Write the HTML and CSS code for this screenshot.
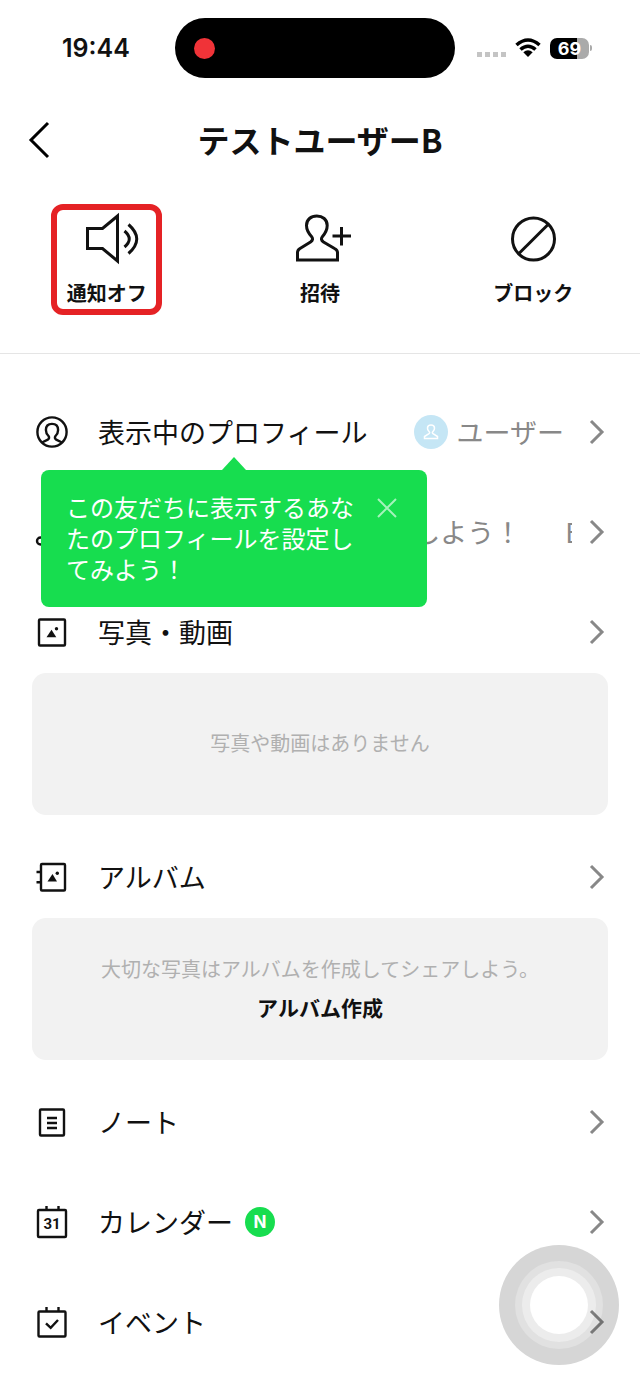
FILE: index.html
```html
<!DOCTYPE html>
<html lang="ja">
<head>
    <meta charset="utf-8">
    <meta name="viewport" content="width=device-width, initial-scale=1">
    <title>テストユーザーB</title>
    <link rel="stylesheet" href="styles.css">
</head>
<body>

<div class="status-bar">
    <span class="time">19:44</span>
    <div class="island"><span class="rec-dot"></span></div>
    <div class="status-icons">
        <svg class="signal" viewBox="0 0 30 8"><path d="M0 2h5v5h-5zM8 2h5v5h-5zM16 2h5v5h-5zM24 2h5v5h-5z"/></svg>
        <svg class="wifi" viewBox="0 0 26 20">
            <path d="M1.5 7Q13-3 24.5 7M5.5 11.5Q13 5 20.5 11.5" fill="none" stroke="#000" stroke-width="3.6"/>
            <path d="M8.3 14.2Q13 10.4 17.7 14.2L13 19z"/>
        </svg>
        <div class="battery"><span>69</span></div>
        <span class="battery-tip"></span>
    </div>
</div>

<header class="header">
    <a class="back" href="#" aria-label="戻る">
        <svg viewBox="0 0 22 38"><path d="M20 2L3 19l17 17"/></svg>
    </a>
    <h1>テストユーザーB</h1>
</header>

<nav class="actions">
    <button class="action marked">
        <svg viewBox="0 0 64 56"><path d="M12.5 17.5h15L42.5 5v45L27.5 37.5h-15zM49.5 20Q59 28 49.5 36M53.5 13.5Q70 28 53.5 42.5"/></svg>
        <span>通知オフ</span>
    </button>
    <button class="action">
        <svg viewBox="0 0 64 56"><path d="M9.5 49v-7.500Q9.500 39 12 37.500L22.500 31Q26 28.500 23.500 25.500Q18.500 20 18.500 14.500C18.500 8.500 23 5 28.800 5S39.200 8.500 39.200 14.500Q39.200 20 34.500 25.500Q32 28.500 35.500 31L46.500 37.500Q49.500 39 49.500 41.500V49zM44.500 25h18.500M53.500 16v18.500"/></svg>
        <span>招待</span>
    </button>
    <button class="action">
        <svg viewBox="0 0 64 56"><circle cx="32.500" cy="28" r="21"/><path d="M17.700 42.800L47.300 13.200"/></svg>
        <span>ブロック</span>
    </button>
</nav>

<ul class="menu">
    <li class="has-tip">
        <a class="row" href="#">
            <svg class="icon" viewBox="0 0 36 36"><circle cx="18" cy="18" r="14.600"/><path d="M8 28.500L13.800 25.600Q16 24.300 14.500 22Q11.900 19.500 11.900 16C11.900 12 14.500 9.900 18 9.900S24.100 12 24.100 16Q24.100 19.500 21.500 22Q20 24.300 22.200 25.600L28 28.500"/></svg>
            <span class="label">表示中のプロフィール</span>
            <span class="profile">
                <span class="avatar"><svg viewBox="0 0 34 34"><path d="M10.500 23.500v-2l4.500-2.800q1.200-.9.200-2Q13.300 14.800 13.500 13C13.700 9 20.300 9 20.500 13Q20.700 14.800 18.800 16.700q-1 1.100.2 2l4.500 2.800v2z"/></svg></span>
                ユーザー
            </span>
            <svg class="chevron" viewBox="0 0 14 24"><path d="M1 1l11 11L1 23"/></svg>
        </a>
        <div class="tip">
            <p>この友だちに表示するあなたのプロフィールを設定してみよう！</p>
            <button class="close" aria-label="閉じる">
                <svg viewBox="0 0 20 20"><path d="M1 1l18 18M19 1L1 19"/></svg>
            </button>
        </div>
    </li>
    <li>
        <a class="row" href="#">
            <svg class="icon" viewBox="0 0 36 36"><circle cx="6.500" cy="27" r="3.500"/><circle cx="24" cy="24" r="3.500"/><path d="M10 27V8l17.500-3v19"/></svg>
            <span class="label">BGM</span>
            <span class="marquee"><span>BGMを設定しよう！</span><span>BGM</span></span>
            <svg class="chevron" viewBox="0 0 14 24"><path d="M1 1l11 11L1 23"/></svg>
        </a>
    </li>
    <li>
        <a class="row" href="#">
            <svg class="icon" viewBox="0 0 36 36"><rect x="5" y="5.500" width="26" height="26" rx="1"/><path class="solid" d="M12.500 23.300l5-7.500 4.800 7.500z"/><circle class="solid" cx="22.500" cy="14.800" r="1.700"/></svg>
            <span class="label">写真・動画</span>
            <svg class="chevron" viewBox="0 0 14 24"><path d="M1 1l11 11L1 23"/></svg>
        </a>
        <div class="card">
            <p>写真や動画はありません</p>
        </div>
    </li>
    <li>
        <a class="row" href="#">
            <svg class="icon" viewBox="0 0 36 36"><rect x="7" y="5" width="24" height="26.500" rx="1"/><path d="M2.500 13H7M2.500 23.300H7"/><path class="solid" d="M13.500 22.500l5-7.500 4.500 7.500z"/><circle class="solid" cx="23.300" cy="14.300" r="1.700"/></svg>
            <span class="label">アルバム</span>
            <svg class="chevron" viewBox="0 0 14 24"><path d="M1 1l11 11L1 23"/></svg>
        </a>
        <div class="card">
            <p>大切な写真はアルバムを作成してシェアしよう。</p>
            <button class="create">アルバム作成</button>
        </div>
    </li>
    <li>
        <a class="row" href="#">
            <svg class="icon" viewBox="0 0 36 36"><rect x="6" y="5.500" width="24" height="26" rx="1"/><path d="M13 14h10M13 19h10M13 24h10"/></svg>
            <span class="label">ノート</span>
            <svg class="chevron" viewBox="0 0 14 24"><path d="M1 1l11 11L1 23"/></svg>
        </a>
    </li>
    <li>
        <a class="row" href="#">
            <svg class="icon" viewBox="0 0 36 36"><rect x="4" y="6" width="28" height="27" rx="1"/><path d="M12.500 2v4M24.500 2v4"/><text x="18" y="25">31</text></svg>
            <span class="label">カレンダー <span class="new">N</span></span>
            <svg class="chevron" viewBox="0 0 14 24"><path d="M1 1l11 11L1 23"/></svg>
        </a>
    </li>
    <li>
        <a class="row" href="#">
            <svg class="icon" viewBox="0 0 36 36"><rect x="4.500" y="7.500" width="27" height="25" rx="1"/><path d="M12.500 3v4.500M24.500 3v4.500M12 19.300l4.700 4.600L24 16"/></svg>
            <span class="label">イベント</span>
            <svg class="chevron" viewBox="0 0 14 24"><path d="M1 1l11 11L1 23"/></svg>
        </a>
    </li>
</ul>

<button class="assistive" aria-label="AssistiveTouch"><span></span></button>

</body>
</html>
```

FILE: styles.css
```css
:root {
    --text-color: #111;
    --sub-color: #888;
    --green: #17dd4f;
}

* {
    box-sizing: border-box;
}

body {
    margin: 0;
    padding-bottom: 24px;
    background: #fff;
    color: var(--text-color);
    font-family: "Noto Sans CJK JP", sans-serif;
}

button {
    background: none;
    border: 0;
    padding: 0;
    color: inherit;
    font-family: inherit;
    cursor: pointer;
}

a {
    color: inherit;
    text-decoration: none;
}

p {
    margin: 0;
}

svg {
    display: block;
    flex: none;
    overflow: visible;
}

/* status bar */
.status-bar {
    display: grid;
    grid-template-columns: 1fr 280px 1fr;
    align-items: center;
    height: 96px;
    padding-right: 10px;
    font-family: Inter, sans-serif;
}

.time {
    padding-left: 62px;
    font-size: 25px;
    font-weight: 600;
}

.island {
    display: flex;
    align-items: center;
    height: 60px;
    padding-left: 19px;
    border-radius: 30px;
    background: #000;
}

.rec-dot {
    width: 21px;
    height: 21px;
    border-radius: 50%;
    background: #f03338;
}

.status-icons {
    display: flex;
    align-items: center;
    justify-content: flex-end;
    padding-right: 38px;
}

.signal {
    width: 30px;
    height: 8px;
    margin: 12px 8px 0 0;
    fill: #c4c4c4;
}

.wifi {
    width: 26px;
    height: 20px;
    margin-right: 9px;
}

.battery {
    width: 39px;
    height: 21px;
    border-radius: 7px;
    background: linear-gradient(to right, #000 69%, #aaa 69%);
    color: #fff;
    font-size: 18px;
    font-weight: 700;
    line-height: 21px;
    text-align: center;
}

.battery-tip {
    width: 2px;
    height: 6px;
    margin-left: 1px;
    border-radius: 0 2px 2px 0;
    background: #aaa;
}

/* header */
.header {
    display: grid;
    grid-template-columns: 60px 1fr 60px;
    align-items: center;
    height: 88px;
}

.back {
    padding-left: 28px;
}

.back svg {
    width: 22px;
    height: 38px;
    fill: none;
    stroke: #000;
    stroke-width: 3;
}

h1 {
    margin: 0;
    padding-bottom: 2px;
    font-size: 32px;
    font-weight: 700;
    line-height: 48px;
    text-align: center;
}

/* actions */
.actions {
    display: grid;
    grid-template-columns: repeat(3, 1fr);
    justify-items: center;
    padding: 20px 0 38px;
    border-bottom: 1px solid #e5e5e5;
}

.action {
    display: flex;
    flex-direction: column;
    align-items: center;
    gap: 12px;
    width: 111px;
    padding: 1px 0 2px;
    border: 6px solid transparent;
    border-radius: 12px;
    font-size: 20px;
    font-weight: 500;
    line-height: 28px;
    white-space: nowrap;
}

.action svg {
    width: 64px;
    height: 56px;
    fill: none;
    stroke: var(--text-color);
    stroke-width: 3;
}

.marked {
    border-color: #e52225;
}

.action span {
    font-weight: 700;
}

/* menu */
.menu {
    display: flex;
    flex-direction: column;
    gap: 18px;
    margin: 0;
    padding: 37px 32px 0;
    list-style: none;
}

.row {
    display: flex;
    align-items: center;
    height: 82px;
    padding: 0 4px 0 2px;
    font-size: 27px;
    line-height: 40px;
    white-space: nowrap;
}

.icon {
    width: 36px;
    height: 36px;
    margin-right: 28px;
    fill: none;
    stroke: var(--text-color);
    stroke-width: 2.4;
}

.icon .solid {
    fill: var(--text-color);
    stroke: none;
}

.icon text {
    fill: var(--text-color);
    stroke: none;
    font-family: Roboto, sans-serif;
    font-size: 15px;
    font-weight: 700;
    text-anchor: middle;
}

.label {
    display: flex;
    flex: 1;
    align-items: center;
    gap: 12px;
}

.chevron {
    width: 14px;
    height: 24px;
    margin-left: 18px;
    fill: none;
    stroke: var(--sub-color);
    stroke-width: 3;
}

.profile {
    display: flex;
    align-items: center;
    gap: 9px;
    padding-right: 8px;
    color: var(--sub-color);
}

.avatar {
    width: 34px;
    height: 34px;
    border-radius: 50%;
    background: #c5e6f5;
}

.avatar svg {
    fill: none;
    stroke: #fff;
    stroke-width: 1.5;
}

.marquee {
    display: flex;
    gap: 44px;
    width: 298px;
    overflow: hidden;
    color: var(--sub-color);
}

.new {
    width: 30px;
    height: 30px;
    border-radius: 50%;
    background: var(--green);
    color: #fff;
    font-family: Inter, sans-serif;
    font-size: 17px;
    font-weight: 700;
    line-height: 30px;
    text-align: center;
}

.card {
    display: flex;
    flex-direction: column;
    align-items: center;
    justify-content: center;
    gap: 8px;
    min-height: 142px;
    margin-bottom: 3px;
    padding-bottom: 2px;
    border-radius: 14px;
    background: #f2f2f2;
    color: #b0b0b0;
    font-size: 20px;
    line-height: 30px;
}

.create {
    color: var(--text-color);
    font-size: 21px;
    font-weight: 700;
    line-height: 30px;
}

/* green balloon under the first row */
.has-tip {
    position: relative;
}

.tip {
    position: absolute;
    z-index: 1;
    top: 79px;
    left: 9px;
    display: flex;
    align-items: flex-start;
    justify-content: space-between;
    width: 386px;
    padding: 21px 30px 23px 25px;
    border-radius: 8px;
    background: var(--green);
    color: #fff;
    font-size: 24px;
    line-height: 31px;
}

.tip::before {
    content: "";
    position: absolute;
    top: -13px;
    left: 50%;
    margin-left: -12px;
    border: 12px solid transparent;
    border-top: 0;
    border-bottom: 13px solid var(--green);
}

.tip p {
    width: 292px;
}

.close svg {
    width: 20px;
    height: 20px;
    margin-top: 7px;
    fill: none;
    stroke: #a4f3bb;
    stroke-width: 2;
}

/* floating button */
.assistive {
    position: fixed;
    right: 21px;
    bottom: 22px;
    display: flex;
    align-items: center;
    justify-content: center;
    width: 120px;
    height: 120px;
    border-radius: 50%;
    background: #d6d6d6;
    mix-blend-mode: multiply;
}

.assistive span {
    width: 58px;
    height: 58px;
    border-radius: 50%;
    background: #fff;
    box-shadow: 0 0 0 8px #ececec, 0 0 0 15px #e1e1e1;
}
```
